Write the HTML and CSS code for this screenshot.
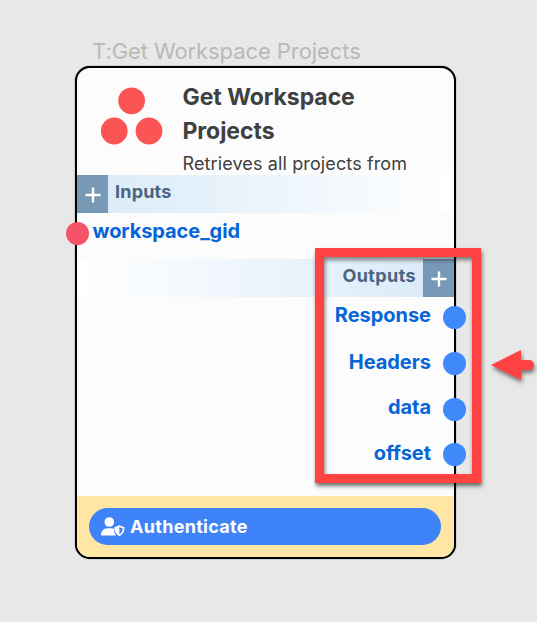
FILE: index.html
```html
<!DOCTYPE html>
<html lang="en">
<head>
<meta charset="utf-8">
<title>Get Workspace Projects</title>
<link rel="stylesheet" href="styles.css">
</head>
<body>
<main class="canvas">
  <div class="node-label"><span>T:Get Workspace Projects</span></div>
  <section class="node">
    <header class="head">
      <svg class="logo" width="62" height="58" viewBox="0 0 62 58"><g fill="#fb5454"><circle cx="30.6" cy="13.8" r="13.4"/><circle cx="13.2" cy="44" r="13.4"/><circle cx="48" cy="44" r="13.4"/></g></svg>
      <div class="intro">
        <h1>Get Workspace<br>Projects</h1>
        <p>Retrieves all projects from</p>
      </div>
    </header>
    <div class="bar inputs"><button class="add"><svg width="16" height="16" viewBox="0 0 16 16"><path d="M8 .5v15M.5 8h15"/></svg></button><span>Inputs</span></div>
    <div class="port in"><span>workspace_gid</span><i class="dot"></i></div>
    <div class="bar outputs"><span>Outputs</span><button class="add"><svg width="16" height="16" viewBox="0 0 16 16"><path d="M8 .5v15M.5 8h15"/></svg></button></div>
    <div class="ports">
      <div class="port out"><span>Response</span><i class="dot"></i></div>
      <div class="port out"><span>Headers</span><i class="dot"></i></div>
      <div class="port out"><span>data</span><i class="dot"></i></div>
      <div class="port out"><span>offset</span><i class="dot"></i></div>
    </div>
    <footer class="foot">
      <button class="auth">
        <svg width="24" height="20" viewBox="0 0 24 20"><g fill="#fff"><circle cx="8.3" cy="5" r="4.8"/><path d="M0 18.2C0 14 2.8 11.2 6.5 11.2h3.7c1.2 0 2 .2 2.8.6-.1 2.7.5 4.8 2.2 6.7H.7c-.5 0-.7-.1-.7-.3z"/><path fill-rule="evenodd" d="M18.4 8.3l5 2c.3 4-1.3 7.1-5 8.9-3.7-1.8-5.3-4.9-5-8.9zM18.4 10.1v7.2c2.3-1.3 3.3-3.3 3.3-5.9z"/></g></svg>
        <span>Authenticate</span>
      </button>
    </footer>
  </section>
  <div class="highlight"></div>
  <svg class="arrow" width="60" height="50" viewBox="0 0 60 50"><path d="M11 25 L41 10 V20 H49 a5 5 0 0 1 0 10 H41 V40 Z" fill="#ff4343"/></svg>
</main>
</body>
</html>
```
FILE: styles.css
```css
* { box-sizing: border-box; }
body { margin: 0; background: #e8e8e8; font-family: Inter, "Liberation Sans", sans-serif; }
.canvas { position: relative; width: 537px; height: 622px; overflow: hidden; padding: 36px 0 0 75px; }
.node-label { height: 30px; padding-left: 17px; font-size: 22px; line-height: 30px; letter-spacing: -.08px; color: #b9b9b9; white-space: nowrap; }
.node { width: 381px; height: 493px; border: 2px solid #000; border-radius: 15px; background: #fcfcfc; display: flex; flex-direction: column; box-shadow: 0 0 1px #000; }
.head { height: 107px; flex: none; display: flex; }
.logo { margin: 19px 0 0 24px; flex: none; }
.intro { margin: 12px 0 0 19.5px; color: #3f4041; white-space: nowrap; }
h1 { margin: 0; font-size: 23px; font-weight: 700; line-height: 34px; letter-spacing: -.05px; }
p { margin: 0; font-size: 18px; line-height: 31px; letter-spacing: .12px; }
.bar { height: 38px; flex: none; display: flex; font-size: 18px; font-weight: 700; line-height: 34px; color: #4b647f; }
.inputs { background: linear-gradient(90deg, #d8eaf8, #fff); }
.inputs span { margin-left: 7px; letter-spacing: .2px; }
.outputs { margin-top: 8px; justify-content: flex-end; background: linear-gradient(90deg, #fff, #e8f2fb 60%, #d7e9f7); }
.outputs span { margin-right: 7px; letter-spacing: .4px; }
button { border: 0; padding: 0; font: inherit; }
.add { width: 31px; height: 38px; background: #7799b5; display: flex; justify-content: center; padding: 12px 0 0; }
.add path { stroke: #fff; stroke-width: 2.4; fill: none; }
.port { position: relative; font-size: 20px; font-weight: 700; line-height: 36px; color: #0564d7; }
.in { height: 38px; padding-left: 15.5px; letter-spacing: -.08px; }
.dot { position: absolute; border-radius: 50%; width: 23px; height: 23px; top: 9px; }
.in .dot { left: -11px; background: #f55468; }
.ports { flex: 1; }
.out { height: 45.8px; text-align: right; padding-right: 23px; letter-spacing: -.04px; }
.out:nth-child(2), .out:nth-child(4) { line-height: 38px; }
.out .dot { right: -12px; background: #3f89fa; }
.foot { height: 61px; flex: none; padding: 12px; background: #ffe6a5; border-radius: 0 0 13px 13px; }
.auth { width: 352px; height: 37px; border-radius: 19px; background: #3f83f8; color: #fff; display: flex; align-items: center; padding-left: 12px; gap: 5px; font-size: 18px; font-weight: 700; letter-spacing: .3px; }
.highlight { position: absolute; left: 315px; top: 248px; width: 166px; height: 235px; border: 9px solid #ff4343; box-shadow: 1px 3px 4px rgba(0,0,0,.55), inset 1px 3px 4px rgba(0,0,0,.5); }
.arrow { position: absolute; left: 480px; top: 340px; filter: drop-shadow(1px 3px 2px rgba(0,0,0,.5)); }
```
